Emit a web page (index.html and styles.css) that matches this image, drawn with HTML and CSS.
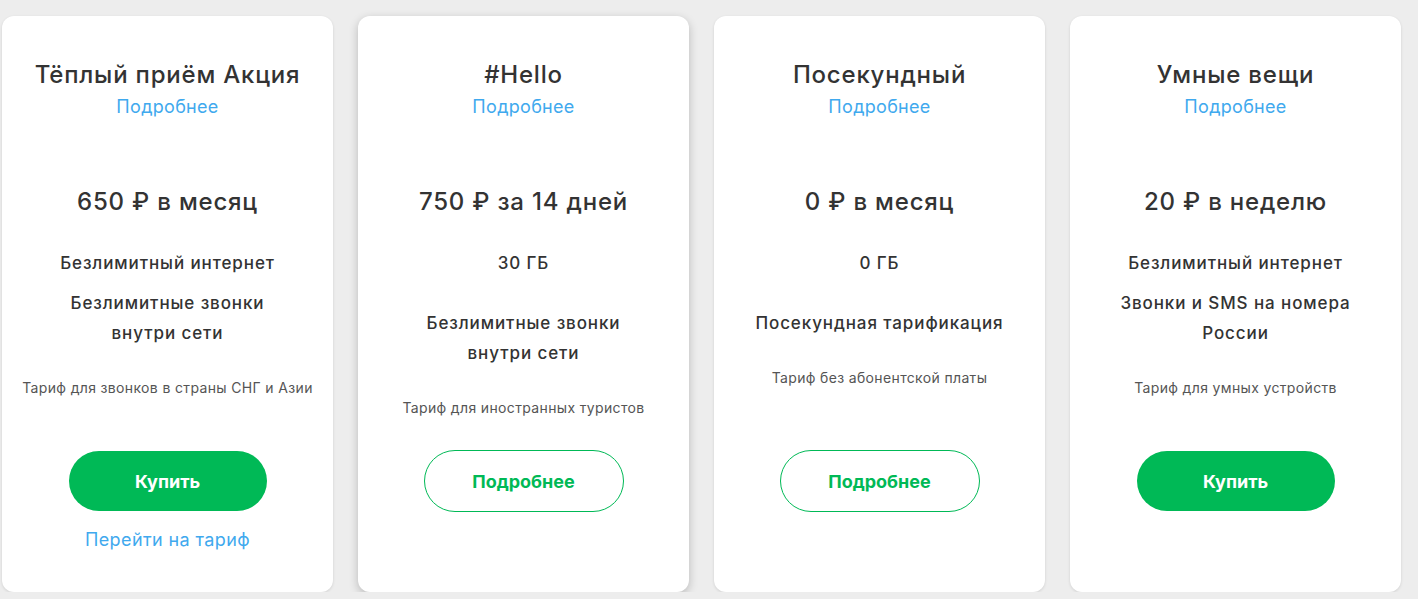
FILE: index.html
```html
<!DOCTYPE html>
<html lang="ru">
<head>
<meta charset="utf-8">
<title>Тарифы</title>
<link rel="stylesheet" href="styles.css">
</head>
<body>
<div class="cards">
  <div class="card">
    <div class="info">
      <div class="title">Тёплый приём Акция</div>
      <a class="more" href="#">Подробнее</a>
      <div class="price">650 ₽ в месяц</div>
      <ul class="features">
        <li>Безлимитный интернет</li>
        <li>Безлимитные звонки<br>внутри сети</li>
      </ul>
      <div class="note">Тариф для звонков в страны СНГ и Азии</div>
    </div>
    <a class="btn btn-fill" href="#">Купить</a>
    <a class="switch" href="#">Перейти на тариф</a>
  </div>
  <div class="card card-hover">
    <div class="info">
      <div class="title">#Hello</div>
      <a class="more" href="#">Подробнее</a>
      <div class="price">750 ₽ за 14 дней</div>
      <ul class="features features-wide">
        <li>30 ГБ</li>
        <li>Безлимитные звонки<br>внутри сети</li>
      </ul>
      <div class="note">Тариф для иностранных туристов</div>
    </div>
    <a class="btn btn-outline" href="#">Подробнее</a>
  </div>
  <div class="card">
    <div class="info">
      <div class="title">Посекундный</div>
      <a class="more" href="#">Подробнее</a>
      <div class="price">0 ₽ в месяц</div>
      <ul class="features features-wide">
        <li>0 ГБ</li>
        <li>Посекундная тарификация</li>
      </ul>
      <div class="note">Тариф без абонентской платы</div>
    </div>
    <a class="btn btn-outline" href="#">Подробнее</a>
  </div>
  <div class="card">
    <div class="info">
      <div class="title">Умные вещи</div>
      <a class="more" href="#">Подробнее</a>
      <div class="price">20 ₽ в неделю</div>
      <ul class="features">
        <li>Безлимитный интернет</li>
        <li>Звонки и SMS на номера<br>России</li>
      </ul>
      <div class="note">Тариф для умных устройств</div>
    </div>
    <a class="btn btn-fill" href="#">Купить</a>
  </div>
</div>
</body>
</html>
```
FILE: styles.css
```css
* { box-sizing: border-box; }
html, body {
  margin: 0;
  padding: 0;
  background: #ededed;
  font-family: Inter, "Noto Sans", Roboto, sans-serif;
  color: #333;
}
.cards {
  display: flex;
  gap: 25px;
  padding: 16px 0 0 2px;
}
.card {
  width: 331px;
  height: 576px;
  flex: 0 0 331px;
  background: #fff;
  border-radius: 12px;
  box-shadow: 0 1px 3px rgba(0,0,0,0.12);
  display: flex;
  flex-direction: column;
  align-items: center;
  text-align: center;
}
.card-hover {
  box-shadow: 0 3px 10px rgba(0,0,0,0.22);
}
.info {
  height: 435px;
  width: 100%;
  padding: 43px 4px 0;
  display: flex;
  flex-direction: column;
  align-items: center;
}
.title {
  font-size: 24px;
  line-height: 32px;
  font-weight: 500;
  letter-spacing: 0.8px;
  color: #333;
}
.more {
  margin-top: 4px;
  font-size: 18px;
  line-height: 24px;
  letter-spacing: 0.3px;
  color: #3fa9ee;
  text-decoration: none;
}
.price {
  margin-top: 67px;
  font-size: 24px;
  line-height: 32px;
  font-weight: 500;
  letter-spacing: 0.8px;
}
.features {
  list-style: none;
  margin: 30px 0 0;
  padding: 0;
  display: flex;
  flex-direction: column;
  gap: 10px;
}
.features-wide { gap: 30px; }
.features li {
  font-size: 17px;
  line-height: 30px;
  font-weight: 500;
  letter-spacing: 0.9px;
  color: #333;
}
.note {
  margin-top: 30px;
  font-size: 14px;
  line-height: 20px;
  letter-spacing: 0.35px;
  color: #555;
}
.btn {
  width: 198px;
  height: 60px;
  border-radius: 30px;
  display: flex;
  align-items: center;
  justify-content: center;
  font-size: 18px;
  font-weight: 700;
  text-decoration: none;
}
.btn-fill {
  background: #00b956;
  color: #fff;
}
.btn-outline {
  width: 200px;
  height: 62px;
  margin-top: -1px;
  border: 1px solid #00b956;
  border-radius: 31px;
  color: #00b956;
}
.switch {
  margin-top: 17px;
  font-size: 18px;
  line-height: 24px;
  letter-spacing: 0.4px;
  color: #3fa9ee;
  text-decoration: none;
}
```
